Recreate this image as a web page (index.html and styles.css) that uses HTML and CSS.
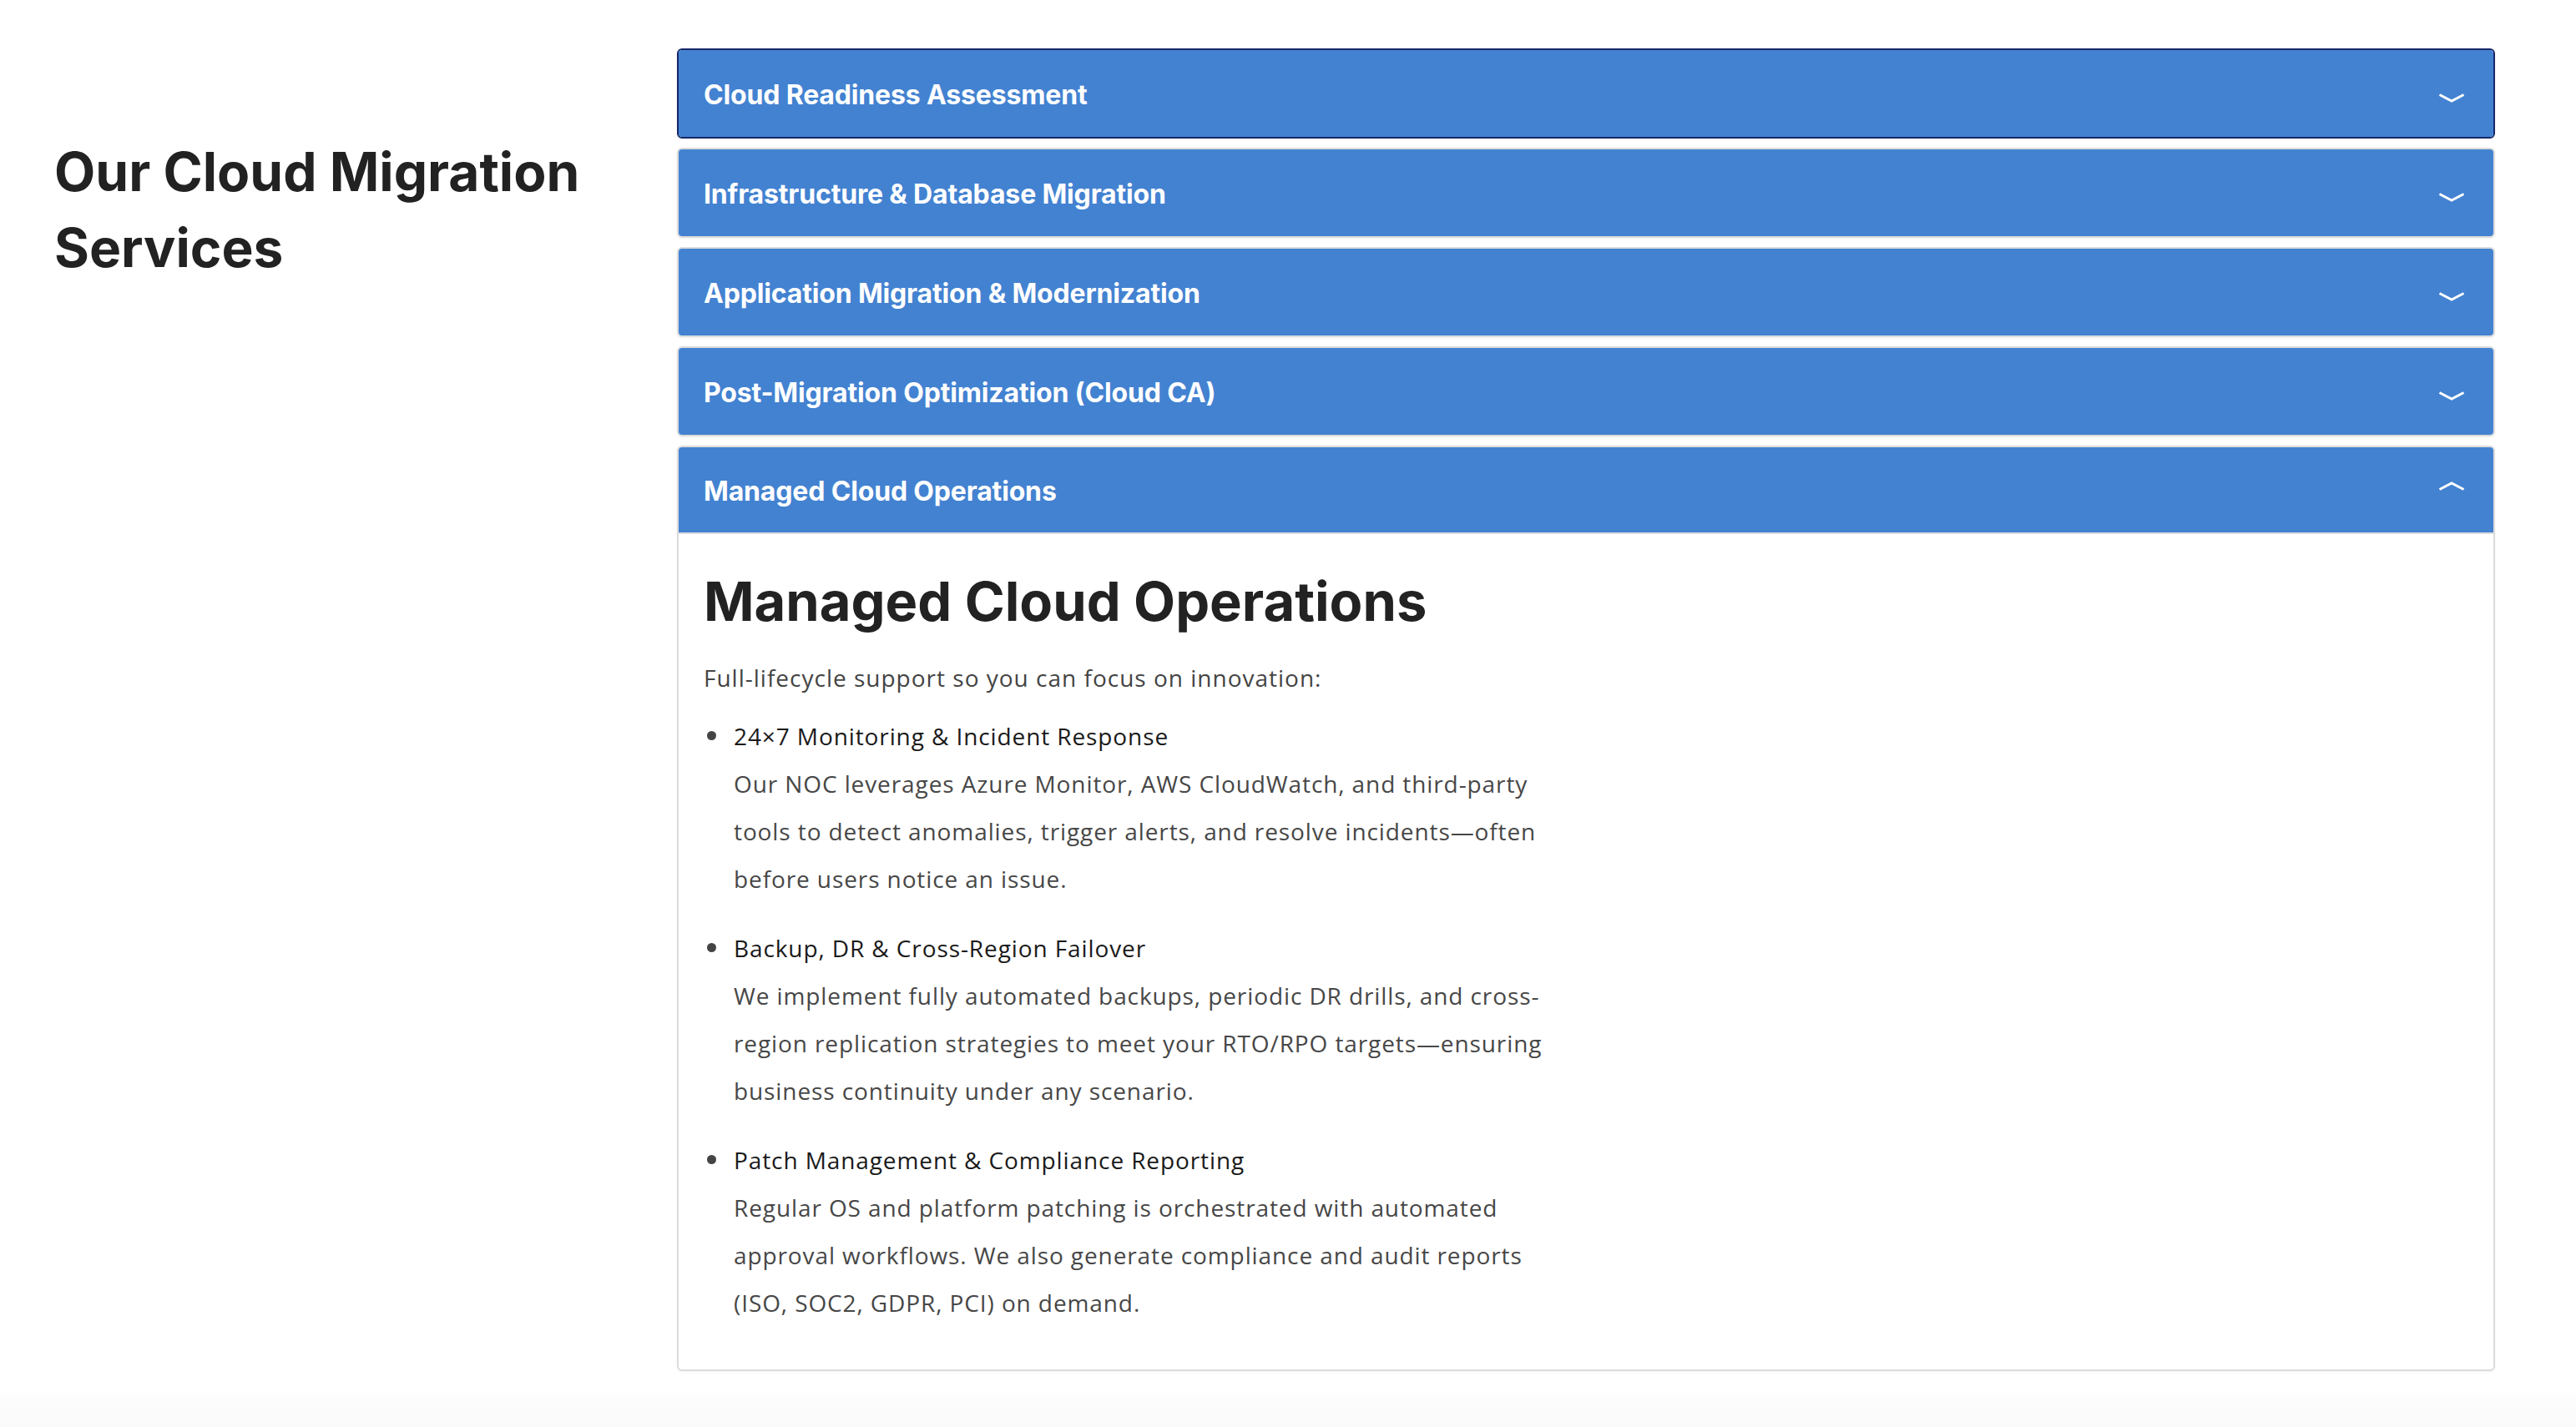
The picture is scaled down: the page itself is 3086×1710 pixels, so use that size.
FILE: index.html
```html
<!DOCTYPE html>
<html lang="en">
<head>
<meta charset="utf-8">
<title>Our Cloud Migration Services</title>
<link rel="stylesheet" href="styles.css">
</head>
<body>
<section class="services">
  <div class="intro">
    <h2 class="intro-title">Our Cloud Migration Services</h2>
  </div>
  <div class="accordion">
    <div class="acc-item acc-item--focus">
      <button class="acc-header" type="button">
        <span class="acc-label">Cloud Readiness Assessment</span>
        <svg class="chev chev--down" width="32" height="11" viewBox="0 0 32 11"><polyline points="1.5,1.5 16,9 30.5,1.5" fill="none" stroke="#fff" stroke-width="3"/></svg>
      </button>
    </div>
    <div class="acc-item">
      <button class="acc-header" type="button">
        <span class="acc-label">Infrastructure &amp; Database Migration</span>
        <svg class="chev chev--down" width="32" height="11" viewBox="0 0 32 11"><polyline points="1.5,1.5 16,9 30.5,1.5" fill="none" stroke="#fff" stroke-width="3"/></svg>
      </button>
    </div>
    <div class="acc-item">
      <button class="acc-header" type="button">
        <span class="acc-label">Application Migration &amp; Modernization</span>
        <svg class="chev chev--down" width="32" height="11" viewBox="0 0 32 11"><polyline points="1.5,1.5 16,9 30.5,1.5" fill="none" stroke="#fff" stroke-width="3"/></svg>
      </button>
    </div>
    <div class="acc-item">
      <button class="acc-header" type="button">
        <span class="acc-label">Post-Migration Optimization (Cloud CA)</span>
        <svg class="chev chev--down" width="32" height="11" viewBox="0 0 32 11"><polyline points="1.5,1.5 16,9 30.5,1.5" fill="none" stroke="#fff" stroke-width="3"/></svg>
      </button>
    </div>
    <div class="acc-item acc-item--open">
      <button class="acc-header acc-header--open" type="button">
        <span class="acc-label">Managed Cloud Operations</span>
        <svg class="chev chev--up" width="32" height="11" viewBox="0 0 32 11"><polyline points="1.5,9.5 16,2 30.5,9.5" fill="none" stroke="#fff" stroke-width="3"/></svg>
      </button>
      <div class="acc-body">
        <h3 class="acc-heading">Managed Cloud Operations</h3>
        <p class="acc-lead">Full-lifecycle support so you can focus on innovation:</p>
        <ul class="feature-list">
          <li class="feature">
            <span class="feature-title">24×7 Monitoring &amp; Incident Response</span>
            <p class="feature-desc">Our NOC leverages Azure Monitor, AWS CloudWatch, and third-party tools to detect anomalies, trigger alerts, and resolve incidents—often before users notice an issue.</p>
          </li>
          <li class="feature">
            <span class="feature-title">Backup, DR &amp; Cross-Region Failover</span>
            <p class="feature-desc">We implement fully automated backups, periodic DR drills, and cross-region replication strategies to meet your RTO/RPO targets—ensuring business continuity under any scenario.</p>
          </li>
          <li class="feature">
            <span class="feature-title">Patch Management &amp; Compliance Reporting</span>
            <p class="feature-desc">Regular OS and platform patching is orchestrated with automated approval workflows. We also generate compliance and audit reports (ISO, SOC2, GDPR, PCI) on demand.</p>
          </li>
        </ul>
      </div>
    </div>
  </div>
</section>
<div class="next-section"></div>
</body>
</html>
```

FILE: styles.css
```css
* { box-sizing: border-box; }

body {
  margin: 0;
  background: #ffffff;
  font-family: "Open Sans", "Noto Sans", sans-serif;
  color: #222;
}

.services {
  display: flex;
  align-items: flex-start;
  padding: 58px 97px 17px 65px;
}

.intro {
  flex: none;
  width: 746px;
}

.intro-title {
  margin: 102px 0 0;
  font-family: Inter, "Noto Sans", sans-serif;
  font-weight: 700;
  font-size: 64px;
  line-height: 91px;
  color: #222;
}

.accordion {
  flex: 1;
  min-width: 0;
}

.acc-item {
  border: 2px solid #dcdcdc;
  border-radius: 6px;
  margin-bottom: 11px;
  overflow: hidden;
  background: #fff;
  box-shadow: 0 1px 3px rgba(0, 0, 0, 0.06);
}

.acc-item--focus {
  border-color: #16276a;
}

.acc-header {
  display: flex;
  align-items: center;
  justify-content: space-between;
  width: 100%;
  height: 104px;
  padding: 2px 34px 0 30px;
  border: none;
  background: #4382d1;
  color: #fff;
  font-family: Inter, "Noto Sans", sans-serif;
  font-weight: 700;
  font-size: 32px;
  letter-spacing: -0.005em;
  text-align: left;
  cursor: pointer;
}

.acc-header--open {
  height: 104px;
  border-bottom: 2px solid #dcdcdc;
}

.chev {
  flex: none;
  display: block;
}

.chev--down { transform: translateY(4px); }
.chev--up { transform: translateY(-6px); }

.acc-body {
  padding: 42px 30px 51px;
}

.acc-heading {
  margin: 0;
  font-family: Inter, "Noto Sans", sans-serif;
  font-weight: 700;
  font-size: 65px;
  line-height: 78px;
  color: #222;
}

.acc-lead {
  margin: 31px 0 0;
  font-size: 28px;
  line-height: 42px;
  letter-spacing: 1px;
  color: #444;
}

.feature-list {
  list-style: none;
  margin: 21px 0 0;
  padding: 0;
  max-width: 1042px;
}

.feature {
  position: relative;
  padding-left: 36px;
  margin-bottom: 26px;
  font-size: 28px;
  line-height: 57px;
  letter-spacing: 0.9px;
}

.feature:last-child { margin-bottom: 0; }

.feature::before {
  content: "";
  position: absolute;
  left: 4px;
  top: 22px;
  width: 11px;
  height: 11px;
  border-radius: 50%;
  background: #444;
}

.feature-title {
  display: block;
  color: #1a1a1a;
}

.feature-desc {
  margin: 0;
  color: #474747;
}

.next-section {
  height: 100px;
  background: linear-gradient(#fdfdfd, #f4f4f4);
}
```
